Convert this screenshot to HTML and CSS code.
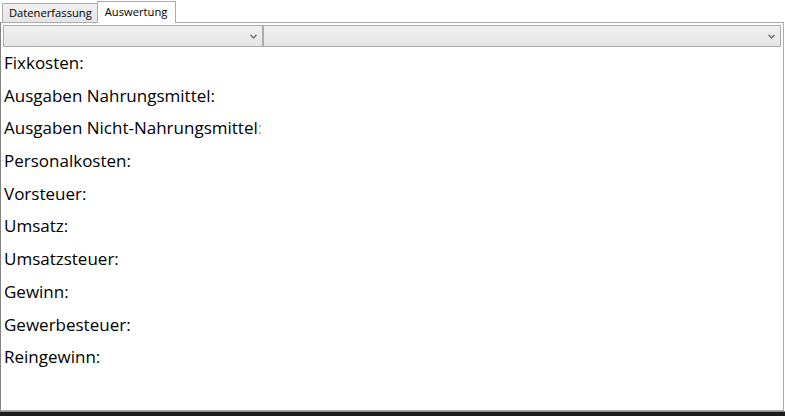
FILE: index.html
```html
<!DOCTYPE html>
<html lang="de">
<head>
<meta charset="utf-8">
<title>Auswertung</title>
<link rel="stylesheet" href="styles.css">
</head>
<body>
<div class="window">
  <div class="tabstrip">
    <div class="tab">Datenerfassung</div>
    <div class="tab active">Auswertung</div>
  </div>
  <div class="panel">
    <div class="combos">
      <div class="combo combo-a"><span class="chev"><svg width="7" height="5" viewBox="0 0 7 5"><path d="M0.5 0.8 L3.5 3.8 L6.5 0.8" fill="none" stroke="#555" stroke-width="1.2"/></svg></span></div>
      <div class="combo combo-b"><span class="chev"><svg width="7" height="5" viewBox="0 0 7 5"><path d="M0.5 0.8 L3.5 3.8 L6.5 0.8" fill="none" stroke="#555" stroke-width="1.2"/></svg></span></div>
    </div>
    <div class="labels">
      <div class="row">Fixkosten:</div>
      <div class="row">Ausgaben Nahrungsmittel:</div>
      <div class="row">Ausgaben Nicht-Nahrungsmittel<span class="colon">:</span></div>
      <div class="row">Personalkosten:</div>
      <div class="row">Vorsteuer:</div>
      <div class="row">Umsatz:</div>
      <div class="row">Umsatzsteuer:</div>
      <div class="row">Gewinn:</div>
      <div class="row">Gewerbesteuer:</div>
      <div class="row">Reingewinn:</div>
    </div>
  </div>
  <div class="footer"></div>
</div>
</body>
</html>
```
FILE: styles.css
```css
html, body {
  margin: 0;
  padding: 0;
  background: #ffffff;
}
.window {
  width: 785px;
  height: 416px;
  display: flex;
  flex-direction: column;
  font-family: "Segoe UI", "Open Sans", "Noto Sans", sans-serif;
  color: #000;
  overflow: hidden;
}
.tabstrip {
  height: 22px;
  display: flex;
  align-items: flex-end;
  padding-left: 2px;
  position: relative;
  z-index: 2;
}
.tab {
  box-sizing: border-box;
  height: 19px;
  padding: 0 5px 0 6px;
  border: 1px solid #acacac;
  border-bottom: none;
  background: linear-gradient(#f0f0f0, #e5e5e5);
  font-size: 11.2px;
  line-height: 18px;
  white-space: nowrap;
}
.tab.active {
  height: 22px;
  margin-bottom: -1px;
  margin-left: -1px;
  background: #ffffff;
  line-height: 20px;
  padding: 0 8px 0 7px;
}
.panel {
  box-sizing: border-box;
  height: 389px;
  margin: 0 1px 0 0;
  border: 1px solid #acacac;
  border-left-color: #828282;
  background: #ffffff;
  display: flex;
  flex-direction: column;
}
.combos {
  display: flex;
  padding: 2px 2px 0 2px;
}
.combo {
  box-sizing: border-box;
  height: 22px;
  border: 1px solid #acacac;
  background: linear-gradient(#f0f0f0, #e5e5e5);
  display: flex;
  align-items: center;
  justify-content: flex-end;
}
.combo-a {
  width: 260px;
}
.combo-b {
  flex: 1;
}
.chev {
  display: flex;
  margin-right: 5px;
}
.labels {
  display: flex;
  flex-direction: column;
  padding-left: 3px;
}
.row {
  height: 32.7px;
  line-height: 32.7px;
  font-size: 17px;
  white-space: nowrap;
}
.colon {
  color: #c8a070;
}
.footer {
  flex: 1;
  background: #1c1c1c;
  border-top: 1px solid #8a8a8a;
}
```
